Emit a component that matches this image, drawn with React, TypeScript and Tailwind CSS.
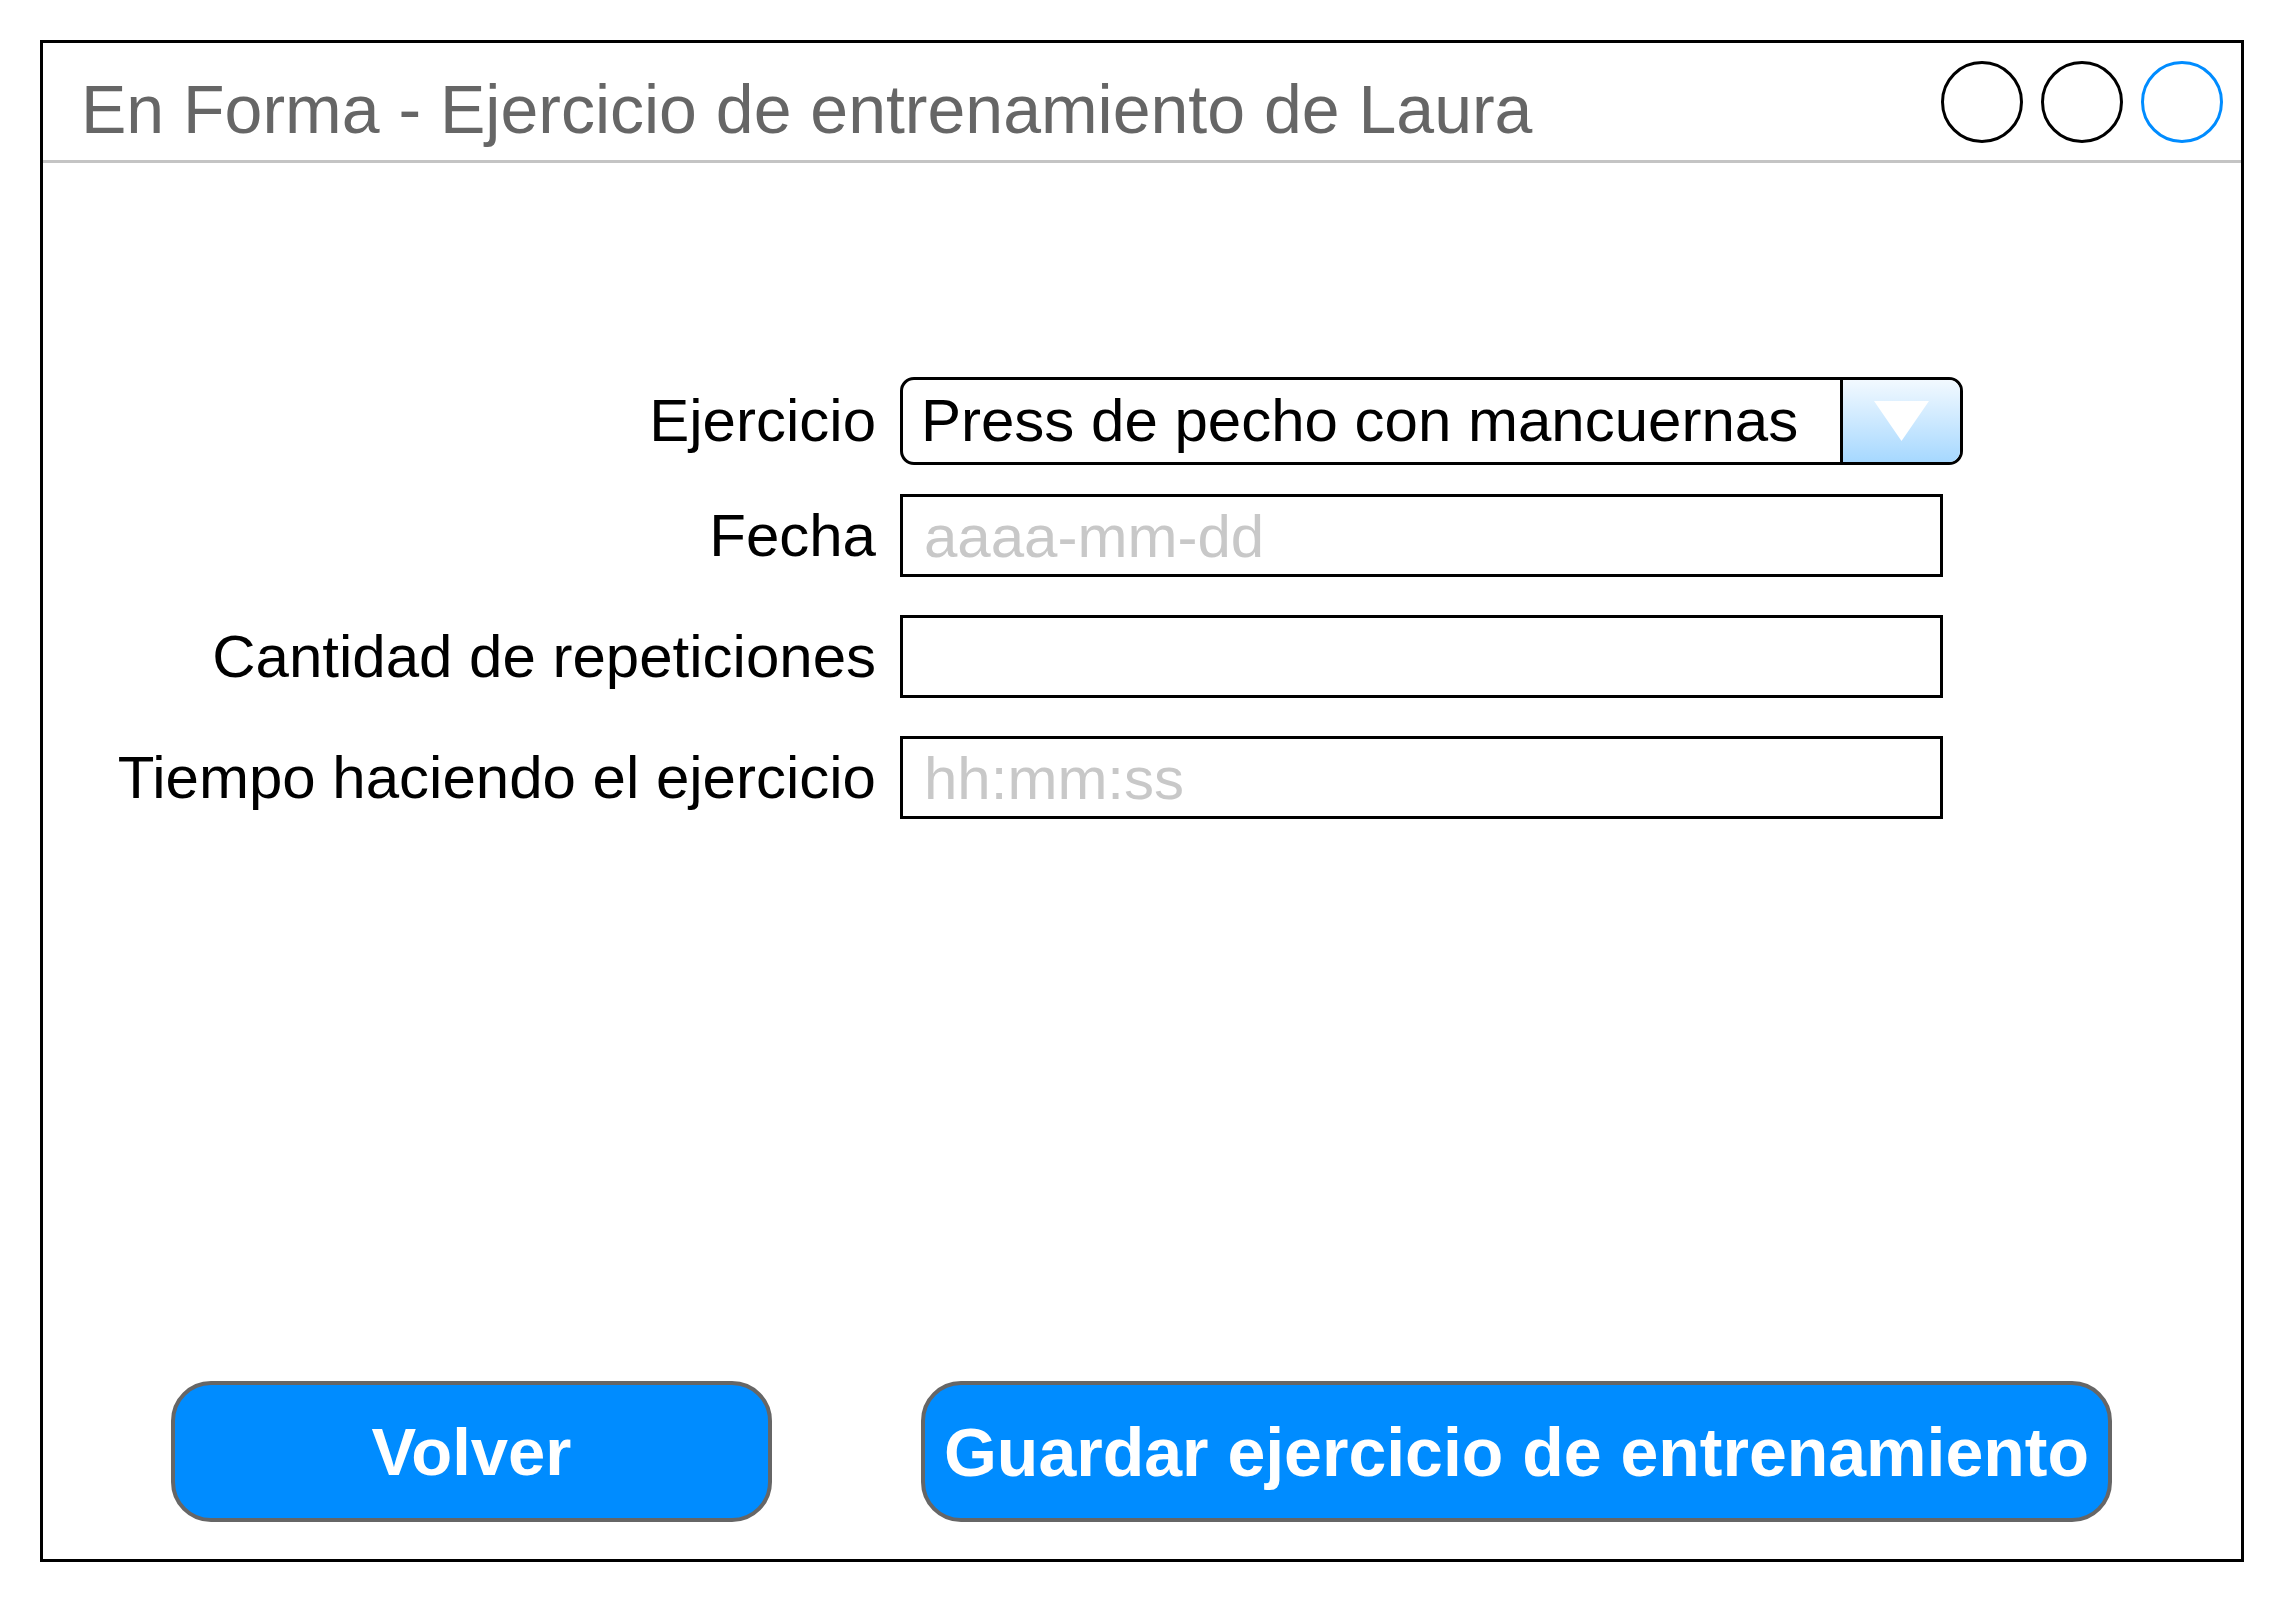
const font = { fontFamily: '"Liberation Sans", Arial, sans-serif' };

function Field({ placeholder }: { placeholder?: string }) {
  return (
    <div className="h-[83px] w-[1043px] border-[3px] border-black flex items-center pl-[21px] pt-[3px]">
      {placeholder && (
        <span className="text-[60px] leading-none text-[#c8c8c8]">{placeholder}</span>
      )}
    </div>
  );
}

function Row({ label, children, className = "" }: { label: string; children: React.ReactNode; className?: string }) {
  return (
    <div className={`flex items-center ${className}`}>
      <div className="w-[833px] text-right text-[60px] leading-none text-black">{label}</div>
      <div className="ml-[24px]">{children}</div>
    </div>
  );
}

export default function App() {
  return (
    <div className="w-[2284px] h-[1604px] bg-white pt-[40px] pl-[40px]" style={font}>
      <div className="w-[2204px] h-[1522px] border-[3px] border-black flex flex-col">
        {/* title bar */}
        <div className="h-[120px] shrink-0 border-b-[3px] border-[#c4c4c4] flex items-center justify-between pl-[38px] pr-[18px]">
          <div className="mt-[14px] text-[68px] leading-none text-[#666666]">
            En Forma - Ejercicio de entrenamiento de Laura
          </div>
          <div className="flex items-center gap-[18px]">
            <div className="w-[82px] h-[82px] rounded-full border-[3.5px] border-black" />
            <div className="w-[82px] h-[82px] rounded-full border-[3.5px] border-black" />
            <div className="w-[82px] h-[82px] rounded-full border-[3.5px] border-[#008cff]" />
          </div>
        </div>

        <div className="flex-1 flex flex-col pt-[214px]">
          <Row label="Ejercicio">
            <div className="h-[88px] w-[1063px] border-[3px] border-black rounded-[14px] overflow-hidden flex">
              <div className="flex-1 flex items-center pl-[18px] text-[60px] leading-none text-black">
                Press de pecho con mancuernas
              </div>
              <div className="w-[120px] border-l-[3px] border-black bg-linear-to-b from-[#f2f9ff] to-[#a6d8ff] flex items-center justify-center">
                <svg width="55" height="40" viewBox="0 0 55 40">
                  <polygon points="0,0 55,0 27.5,40" fill="#ffffff" />
                </svg>
              </div>
            </div>
          </Row>
          <Row label="Fecha" className="mt-[29px]">
            <Field placeholder="aaaa-mm-dd" />
          </Row>
          <Row label="Cantidad de repeticiones" className="mt-[38px]">
            <Field />
          </Row>
          <Row label="Tiempo haciendo el ejercicio" className="mt-[38px]">
            <Field placeholder="hh:mm:ss" />
          </Row>

          <div className="mt-auto mb-[37px] pl-[128px] flex gap-[149px]">
            <button className="w-[601px] h-[141px] bg-[#008cff] border-[4px] border-[#666666] rounded-[40px] text-white font-bold text-[67px] leading-none">
              Volver
            </button>
            <button className="w-[1191px] h-[141px] bg-[#008cff] border-[4px] border-[#666666] rounded-[40px] text-white font-bold text-[68px] leading-none">
              Guardar ejercicio de entrenamiento
            </button>
          </div>
        </div>
      </div>
    </div>
  );
}
